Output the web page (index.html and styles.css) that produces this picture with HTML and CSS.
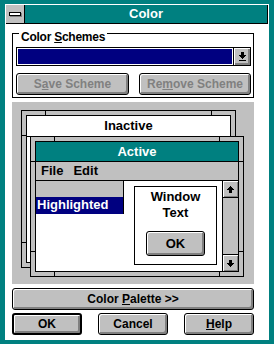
FILE: index.html
```html
<!DOCTYPE html>
<html lang="en">

<head>
    <meta charset="UTF-8">
    <title>Color</title>
    <link rel="stylesheet" href="styles.css">
</head>

<body>
    <div class="dialog">
        <div class="titlebar">
            <div class="sysmenu">
                <svg width="18" height="18" viewBox="0 0 18 18" shape-rendering="crispEdges">
                    <rect x="4" y="8" width="12" height="4" fill="#808080" />
                    <rect x="3" y="7" width="12" height="4" fill="#000" />
                    <rect x="4" y="8" width="10" height="2" fill="#fff" />
                </svg>
            </div>
            <div class="caption">Color</div>
        </div>

        <div class="client">
            <div class="group">
                <span class="legend">Color <u>S</u>chemes</span>
                <div class="combo">
                    <div class="combo-list">
                        <div class="combo-sel"></div>
                    </div>
                    <div class="combo-btn">
                        <svg width="7" height="9" viewBox="0 0 7 9" shape-rendering="crispEdges">
                            <rect x="2" y="0" width="3" height="3" />
                            <rect x="0" y="3" width="7" height="1" />
                            <rect x="1" y="4" width="5" height="1" />
                            <rect x="2" y="5" width="3" height="1" />
                            <rect x="3" y="6" width="1" height="1" />
                            <rect x="0" y="8" width="7" height="1" />
                        </svg>
                    </div>
                </div>
                <div class="scheme-buttons">
                    <button class="btn disabled save"><span>S<u>a</u>ve Scheme</span></button>
                    <button class="btn disabled remove"><span>Re<u>m</u>ove Scheme</span></button>
                </div>
            </div>

            <div class="sample">
                <div class="win inactive">
                    <span class="mk top near"></span>
                    <span class="mk top far"></span>
                    <span class="mk left near"></span>
                    <span class="mk left far"></span>
                    <div class="win-in">
                        <div class="wtitle">Inactive</div>
                        <div class="wclient"></div>
                    </div>
                </div>

                <div class="win active">
                    <span class="mk top near"></span>
                    <span class="mk top far"></span>
                    <span class="mk bottom near"></span>
                    <span class="mk bottom far"></span>
                    <span class="mk left near"></span>
                    <span class="mk left far"></span>
                    <span class="mk right near"></span>
                    <span class="mk right far"></span>
                    <div class="win-in">
                        <div class="wtitle">Active</div>
                        <div class="menubar"><span>File</span><span>Edit</span></div>
                        <div class="wclient">
                            <div class="popup">
                                <div class="popup-item"></div>
                                <div class="popup-item hl">Highlighted</div>
                            </div>
                            <div class="msgbox">
                                <div class="msg-text">Window<br>Text</div>
                                <button class="btn msg-ok"><span>OK</span></button>
                            </div>
                            <div class="scrollbar">
                                <div class="sb-btn up">
                                    <svg width="7" height="7" viewBox="0 0 7 7" shape-rendering="crispEdges">
                                        <rect x="3" y="0" width="1" height="1" />
                                        <rect x="2" y="1" width="3" height="1" />
                                        <rect x="1" y="2" width="5" height="1" />
                                        <rect x="0" y="3" width="7" height="1" />
                                        <rect x="2" y="4" width="3" height="3" />
                                    </svg>
                                </div>
                                <div class="sb-track"></div>
                                <div class="sb-btn down">
                                    <svg width="7" height="7" viewBox="0 0 7 7" shape-rendering="crispEdges">
                                        <rect x="2" y="0" width="3" height="3" />
                                        <rect x="0" y="3" width="7" height="1" />
                                        <rect x="1" y="4" width="5" height="1" />
                                        <rect x="2" y="5" width="3" height="1" />
                                        <rect x="3" y="6" width="1" height="1" />
                                    </svg>
                                </div>
                            </div>
                        </div>
                    </div>
                </div>
            </div>

            <button class="btn wide"><span>Color <u>P</u>alette &gt;&gt;</span></button>

            <div class="actions">
                <button class="btn default"><span>OK</span></button>
                <button class="btn"><span>Cancel</span></button>
                <button class="btn"><span><u>H</u>elp</span></button>
            </div>
        </div>
    </div>
</body>

</html>
```

FILE: styles.css
```css
* {
    box-sizing: border-box;
}

body {
    margin: 0;
    background-color: #008080;
    font: bold 12px "Liberation Sans", Arial, sans-serif;
    color: black;
}

u {
    text-underline-offset: 1px;
}

.dialog {
    margin: 4px 5px;
    width: 264px;
    height: 336px;
    border: 1px solid white;
    display: flex;
    flex-direction: column;
}

/* title bar */
.titlebar {
    display: flex;
    height: 19px;
    border-bottom: 1px solid black;
}

.sysmenu {
    width: 19px;
    background-color: #c0c0c0;
    border-right: 1px solid black;
}

.sysmenu svg {
    display: block;
}

.caption {
    flex: 1;
    background-color: #008080;
    color: white;
    font-size: 13px;
    text-align: center;
    line-height: 18px;
    border-right: 1px solid black;
}

.client {
    flex: 1;
    background-color: white;
    padding: 9px 14px 4px 6px;
    display: flex;
    flex-direction: column;
}

/* color schemes group */
.group {
    position: relative;
    height: 65px;
    border: 1px solid black;
    padding: 13px 2px 2px 3px;
}

.legend {
    position: absolute;
    top: -4px;
    left: 6px;
    padding: 0 2px;
    background-color: white;
    line-height: 14px;
    letter-spacing: -0.25px;
}

.combo {
    display: flex;
    height: 19px;
    border: 1px solid black;
}

.combo-list {
    flex: 1;
    padding: 1px;
    background-color: white;
}

.combo-sel {
    height: 100%;
    background-color: #000080;
}

.combo-btn {
    width: 17px;
    border-left: 1px solid black;
    background-color: #c0c0c0;
    box-shadow: inset 1px 1px white, inset -2px -2px #808080;
    display: flex;
    align-items: center;
    justify-content: center;
    padding-bottom: 1px;
}

.scheme-buttons {
    display: flex;
    justify-content: space-between;
    margin-top: 7px;
}

/* buttons */
.btn {
    font: inherit;
    color: black;
    margin: 0;
    padding: 0;
    height: 22px;
    background-color: #c0c0c0;
    border: 1px solid black;
    border-radius: 3px;
    box-shadow: inset 1px 1px white, inset -2px -2px #808080;
    display: flex;
    align-items: center;
    justify-content: center;
}

.save {
    width: 113px;
}

.remove {
    width: 112px;
}

.disabled {
    color: #808080;
}

.wide {
    margin-top: 4px;
    width: 100%;
}

.actions {
    display: flex;
    justify-content: space-between;
    margin-top: 3px;
}

.actions .btn {
    width: 70px;
}

.default {
    border-width: 2px;
}

/* sample area */
.sample {
    position: relative;
    margin-top: 4px;
    height: 182px;
    background-color: #c0c0c0;
    font-size: 13px;
}

.win {
    position: absolute;
    border: 1px solid black;
    padding: 4px;
    background-color: #c0c0c0;
    display: flex;
    flex-direction: column;
}

.inactive {
    left: 9px;
    top: 8px;
    width: 215px;
    height: 158px;
}

.active {
    left: 18px;
    top: 34px;
    width: 214px;
    height: 141px;
}

.mk {
    position: absolute;
    background-color: black;
}

.mk.top,
.mk.bottom {
    width: 1px;
    height: 4px;
}

.mk.left,
.mk.right {
    width: 4px;
    height: 1px;
}

.mk.top {
    top: 0;
}

.mk.bottom {
    bottom: 0;
}

.mk.left {
    left: 0;
}

.mk.right {
    right: 0;
}

.mk.top.near,
.mk.bottom.near {
    left: 23px;
}

.mk.top.far,
.mk.bottom.far {
    right: 23px;
}

.mk.left.near,
.mk.right.near {
    top: 24px;
}

.mk.left.far,
.mk.right.far {
    bottom: 24px;
}

.win-in {
    flex: 1;
    border: 1px solid black;
    background-color: white;
    display: flex;
    flex-direction: column;
}

.wtitle {
    text-align: center;
    border-bottom: 1px solid black;
}

.inactive .wtitle {
    height: 21px;
    line-height: 20px;
}

.active .wtitle {
    height: 20px;
    line-height: 19px;
    background-color: #008080;
    color: white;
}

.menubar {
    display: flex;
    height: 19px;
    line-height: 18px;
    background-color: #c0c0c0;
    border-bottom: 1px solid black;
}

.menubar span {
    padding: 0 5px;
}

.wclient {
    flex: 1;
    display: flex;
    align-items: flex-start;
}

.popup {
    width: 88px;
    border-right: 1px solid black;
    background-color: #c0c0c0;
}

.popup-item {
    height: 16px;
    line-height: 16px;
}

.popup-item.hl {
    height: 17px;
    padding-left: 1px;
    background-color: #000080;
    color: white;
}

.msgbox {
    width: 83px;
    height: 79px;
    margin: 5px 5px 0 10px;
    border: 1px solid black;
    padding-top: 2px;
    display: flex;
    flex-direction: column;
    align-items: center;
}

.msg-text {
    text-align: center;
    line-height: 16px;
}

.msg-ok {
    width: 59px;
    height: 25px;
    margin-top: 10px;
}

.scrollbar {
    width: 16px;
    align-self: stretch;
    border-left: 1px solid black;
    background-color: #c0c0c0;
    display: flex;
    flex-direction: column;
}

.sb-btn {
    height: 17px;
    background-color: #c0c0c0;
    box-shadow: inset 1px 1px white, inset -1px -1px #808080;
    display: flex;
    align-items: center;
    justify-content: center;
}

.sb-btn.up {
    border-bottom: 1px solid black;
}

.sb-btn.down {
    border-top: 1px solid black;
}

.sb-track {
    flex: 1;
}
```
